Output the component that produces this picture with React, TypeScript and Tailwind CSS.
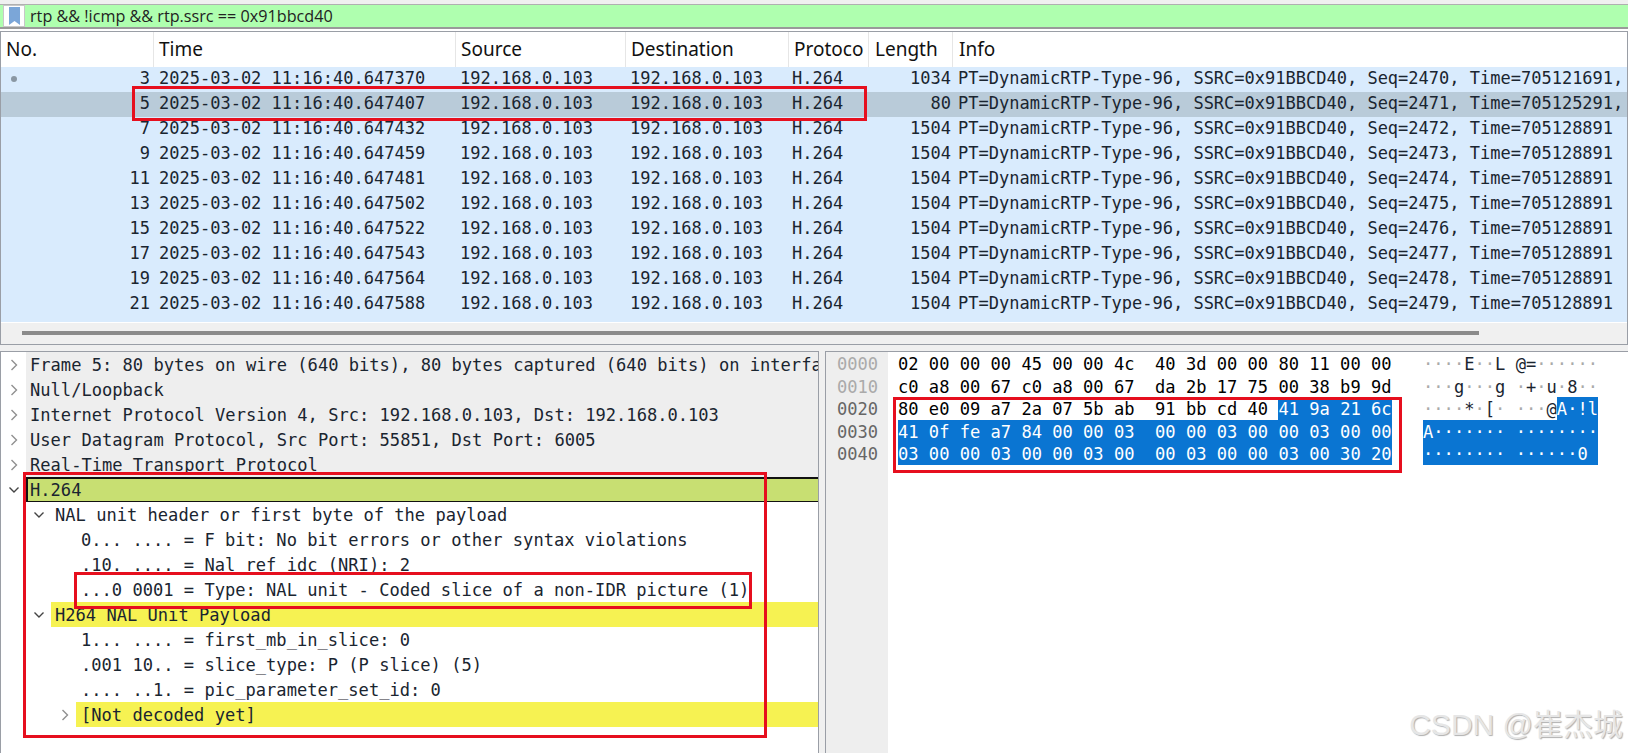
import React from 'react';

const mono = "font-['DejaVu_Sans_Mono',monospace]";

interface Packet {
  no: number;
  time: string;
  len: number;
  seq: number;
  ts: string;
}

const packets: Packet[] = [
  { no: 3, time: '647370', len: 1034, seq: 2470, ts: '705121691,' },
  { no: 5, time: '647407', len: 80, seq: 2471, ts: '705125291,' },
  { no: 7, time: '647432', len: 1504, seq: 2472, ts: '705128891' },
  { no: 9, time: '647459', len: 1504, seq: 2473, ts: '705128891' },
  { no: 11, time: '647481', len: 1504, seq: 2474, ts: '705128891' },
  { no: 13, time: '647502', len: 1504, seq: 2475, ts: '705128891' },
  { no: 15, time: '647522', len: 1504, seq: 2476, ts: '705128891' },
  { no: 17, time: '647543', len: 1504, seq: 2477, ts: '705128891' },
  { no: 19, time: '647564', len: 1504, seq: 2478, ts: '705128891' },
  { no: 21, time: '647588', len: 1504, seq: 2479, ts: '705128891' },
];

const Chevron = ({ open, left }: { open?: boolean; left: number }) => (
  <svg width="12" height="12" viewBox="0 0 12 12" fill="none" className="absolute top-[7px]" style={{ left }}>
    <path
      d={open ? 'M1.5 3.5 L6 8 L10.5 3.5' : 'M3.5 1 L8.5 6 L3.5 11'}
      stroke={open ? '#444' : '#909090'}
      strokeWidth="1.4"
    />
  </svg>
);

const HeaderCell = ({ label, width }: { label: string; width: string }) => (
  <div className={`${width} shrink-0 h-full flex items-center pl-[5px] border-r border-[#e6e6e6] overflow-hidden whitespace-nowrap`}>
    {label}
  </div>
);

const PacketRow = ({ p, index }: { p: Packet; index: number }) => (
  <div className={`flex h-[25px] items-center pb-[2px] whitespace-pre text-[#1a2530] ${index === 1 ? 'bg-[#b9cbd9]' : 'bg-[#d9ebfd]'}`}>
    <div className="w-[153px] shrink-0 pr-[4px] text-right relative">
      {index === 0 && <span className="absolute left-[10px] top-[10px] w-[6px] h-[6px] rounded-full bg-[#8a97a3]" />}
      {p.no}
    </div>
    <div className="w-[302px] shrink-0 pl-[5px]">2025-03-02 11:16:40.{p.time}</div>
    <div className="w-[170px] shrink-0 pl-[4px]">192.168.0.103</div>
    <div className="w-[163px] shrink-0 pl-[4px]">192.168.0.103</div>
    <div className="w-[80px] shrink-0 pl-[3px]">H.264</div>
    <div className="w-[84px] shrink-0 text-right pr-[2px]">{p.len}</div>
    <div className="flex-1 pl-[5px] overflow-hidden">
      PT=DynamicRTP-Type-96, SSRC=0x91BBCD40, Seq={p.seq}, Time={p.ts}
    </div>
  </div>
);

const DetailRow = ({
  indent,
  text,
  bg,
  bgLeft = 0,
  chevronLeft,
  open,
}: {
  indent: number;
  text: string;
  bg?: string;
  bgLeft?: number;
  chevronLeft?: number;
  open?: boolean;
}) => (
  <div className="relative flex h-[25px] items-center pt-[2px] whitespace-pre text-[#1a2530]">
    {bg && <div className={`absolute top-0 bottom-0 right-0 ${bg}`} style={{ left: bgLeft }} />}
    {chevronLeft !== undefined && <Chevron open={open} left={chevronLeft} />}
    <span className="relative" style={{ marginLeft: indent }}>
      {text}
    </span>
  </div>
);

// one run of the ascii column, dots are drawn lighter than printable chars
const Ascii = ({ text, selected }: { text: string; selected?: boolean }) => (
  <span className={`h-[22.5px] ${selected ? 'bg-[#0a75d2] text-white' : 'text-[#1a2530]'}`}>
    {text.split('').map((c, i) => (
      <span key={i} className={c === '·' && !selected ? 'text-[#aaaaaa]' : ''}>
        {c}
      </span>
    ))}
  </span>
);

const HexRow = ({ plain, sel, asciiPlain, asciiSel }: { plain?: string; sel?: string; asciiPlain?: string; asciiSel?: string }) => (
  <div className="flex h-[22.5px] leading-[24px] whitespace-pre">
    <div className="w-[525px] shrink-0 flex">
      {plain && <span className="text-black">{plain}</span>}
      {sel && <span className="h-[22.5px] bg-[#0a75d2] text-white">{sel}</span>}
    </div>
    {asciiPlain && <Ascii text={asciiPlain} />}
    {asciiSel && <Ascii text={asciiSel} selected />}
  </div>
);

const grayRows = [
  'Frame 5: 80 bytes on wire (640 bits), 80 bytes captured (640 bits) on interfa',
  'Null/Loopback',
  'Internet Protocol Version 4, Src: 192.168.0.103, Dst: 192.168.0.103',
  'User Datagram Protocol, Src Port: 55851, Dst Port: 6005',
  'Real-Time Transport Protocol',
];

export default function App() {
  return (
    <div className="relative w-[1628px] h-[753px] overflow-hidden bg-white font-['Liberation_Sans',sans-serif]">
      <div className="h-[5px] bg-[#f0f0f0] border-b border-[#b0b0b0]" />

      {/* filter bar */}
      <div className="flex h-[24px] bg-[#afffaf] border-b-2 border-[#9a9a9a]">
        <div className="w-[22px] ml-[3px] bg-white border border-[#c8c8c8] flex items-center justify-center">
          <svg width="11" height="18" viewBox="0 0 11 18">
            <path d="M0 0 H11 V18 L5.5 14 L0 18 Z" fill="#7ba6d8" />
          </svg>
        </div>
        <div className="pl-[5px] text-[16.2px] leading-[22px] text-[#222] font-['Open_Sans',sans-serif]">
          rtp &amp;&amp; !icmp &amp;&amp; rtp.ssrc == 0x91bbcd40
        </div>
      </div>

      {/* packet list */}
      <div className="mt-[2px] h-[314px] border border-[#9a9ea6] overflow-hidden">
        <div className="flex h-[35px] items-center text-[19px] text-[#111] font-['Noto_Sans',sans-serif]">
          <HeaderCell label="No." width="w-[153px]" />
          <HeaderCell label="Time" width="w-[302px]" />
          <HeaderCell label="Source" width="w-[170px]" />
          <HeaderCell label="Destination" width="w-[163px]" />
          <HeaderCell label="Protoco" width="w-[80px]" />
          <HeaderCell label="Length" width="w-[84px] !pl-[6px]" />
          <HeaderCell label="Info" width="w-auto border-r-0 !pl-[6px]" />
        </div>
        <div className={`${mono} text-[17px]`}>
          {packets.map((p, i) => (
            <PacketRow key={p.no} p={p} index={i} />
          ))}
          <div className="h-[5px] bg-[#d9ebfd]" />
        </div>
        <div className="h-[22px] bg-[#f0f0f0] border-t border-white pt-[8px] pl-[21px]">
          <div className="h-[4px] w-[1457px] bg-[#8b8b8b]" />
        </div>
      </div>

      {/* bottom panes */}
      <div className={`${mono} text-[17.08px] pt-[6px] flex h-[408px] bg-[#f0f0f0]`}>
        <div className="w-[819px] bg-white border-l border-t border-r border-[#9a9ea6] overflow-hidden">
          {grayRows.map(t => (
            <DetailRow key={t} indent={29} text={t} bg="bg-[#eeeeee]" bgLeft={25} chevronLeft={7} />
          ))}
          <div className="relative h-[25px] flex items-center text-[#1a2530]">
            <Chevron open left={7} />
            <div className="ml-[25px] h-full flex-1 flex items-center bg-[#c8df72] border-t-2 border-b border-l-2 border-[#111] pl-[2px] pt-[1px]">
              H.264
            </div>
          </div>
          <DetailRow indent={54} text="NAL unit header or first byte of the payload" chevronLeft={32} open />
          <DetailRow indent={80} text="0... .... = F bit: No bit errors or other syntax violations" />
          <DetailRow indent={80} text=".10. .... = Nal ref idc (NRI): 2" />
          <DetailRow indent={80} text="...0 0001 = Type: NAL unit - Coded slice of a non-IDR picture (1)" />
          <DetailRow indent={54} text="H264 NAL Unit Payload" bg="bg-[#f6f252]" bgLeft={50} chevronLeft={32} open />
          <DetailRow indent={80} text="1... .... = first_mb_in_slice: 0" />
          <DetailRow indent={80} text=".001 10.. = slice_type: P (P slice) (5)" />
          <DetailRow indent={80} text=".... ..1. = pic_parameter_set_id: 0" />
          <DetailRow indent={80} text="[Not decoded yet]" bg="bg-[#f6f252]" bgLeft={75} chevronLeft={58} />
        </div>

        <div className="ml-[6px] flex-1 flex bg-white border-l border-t border-[#9a9ea6]">
          <div className="w-[62px] bg-[#eeeeee] pl-[11px] pt-[1px] leading-[22.5px] text-[#666666]">
            <div className="text-[#aaaaaa]">0000</div>
            <div className="text-[#aaaaaa]">0010</div>
            <div>0020</div>
            <div>0030</div>
            <div>0040</div>
          </div>
          <div className="pl-[10px]">
            <HexRow plain="02 00 00 00 45 00 00 4c  40 3d 00 00 80 11 00 00" asciiPlain="····E··L @=······" />
            <HexRow plain="c0 a8 00 67 c0 a8 00 67  da 2b 17 75 00 38 b9 9d" asciiPlain="···g···g ·+·u·8··" />
            <HexRow plain="80 e0 09 a7 2a 07 5b ab  91 bb cd 40 " sel="41 9a 21 6c" asciiPlain="····*·[· ···@" asciiSel="A·!l" />
            <HexRow sel="41 0f fe a7 84 00 00 03  00 00 03 00 00 03 00 00" asciiSel="A······· ········" />
            <HexRow sel="03 00 00 03 00 00 03 00  00 03 00 00 03 00 30 20" asciiSel="········ ······0 " />
          </div>
        </div>
      </div>

      {/* annotation boxes */}
      <div className="absolute left-[132px] top-[86px] w-[735px] h-[35px] border-[3px] border-[#e60f1e]" />
      <div className="absolute left-[23px] top-[472px] w-[744px] h-[266px] border-[3px] border-[#e60f1e]" />
      <div className="absolute left-[74px] top-[572px] w-[678px] h-[37px] border-[3px] border-[#e60f1e]" />
      <div className="absolute left-[893px] top-[397px] w-[509px] h-[76px] border-[3px] border-[#e60f1e]" />

      {/* watermark */}
      <div className="absolute right-[5px] bottom-[11px] text-[30px] leading-[34px] text-[#e6e6e6] [text-shadow:1px_1px_1px_#b0b0b0] font-['Liberation_Sans','Noto_Sans_CJK_SC',sans-serif] whitespace-nowrap">
        CSDN @崔杰城
      </div>
    </div>
  );
}
